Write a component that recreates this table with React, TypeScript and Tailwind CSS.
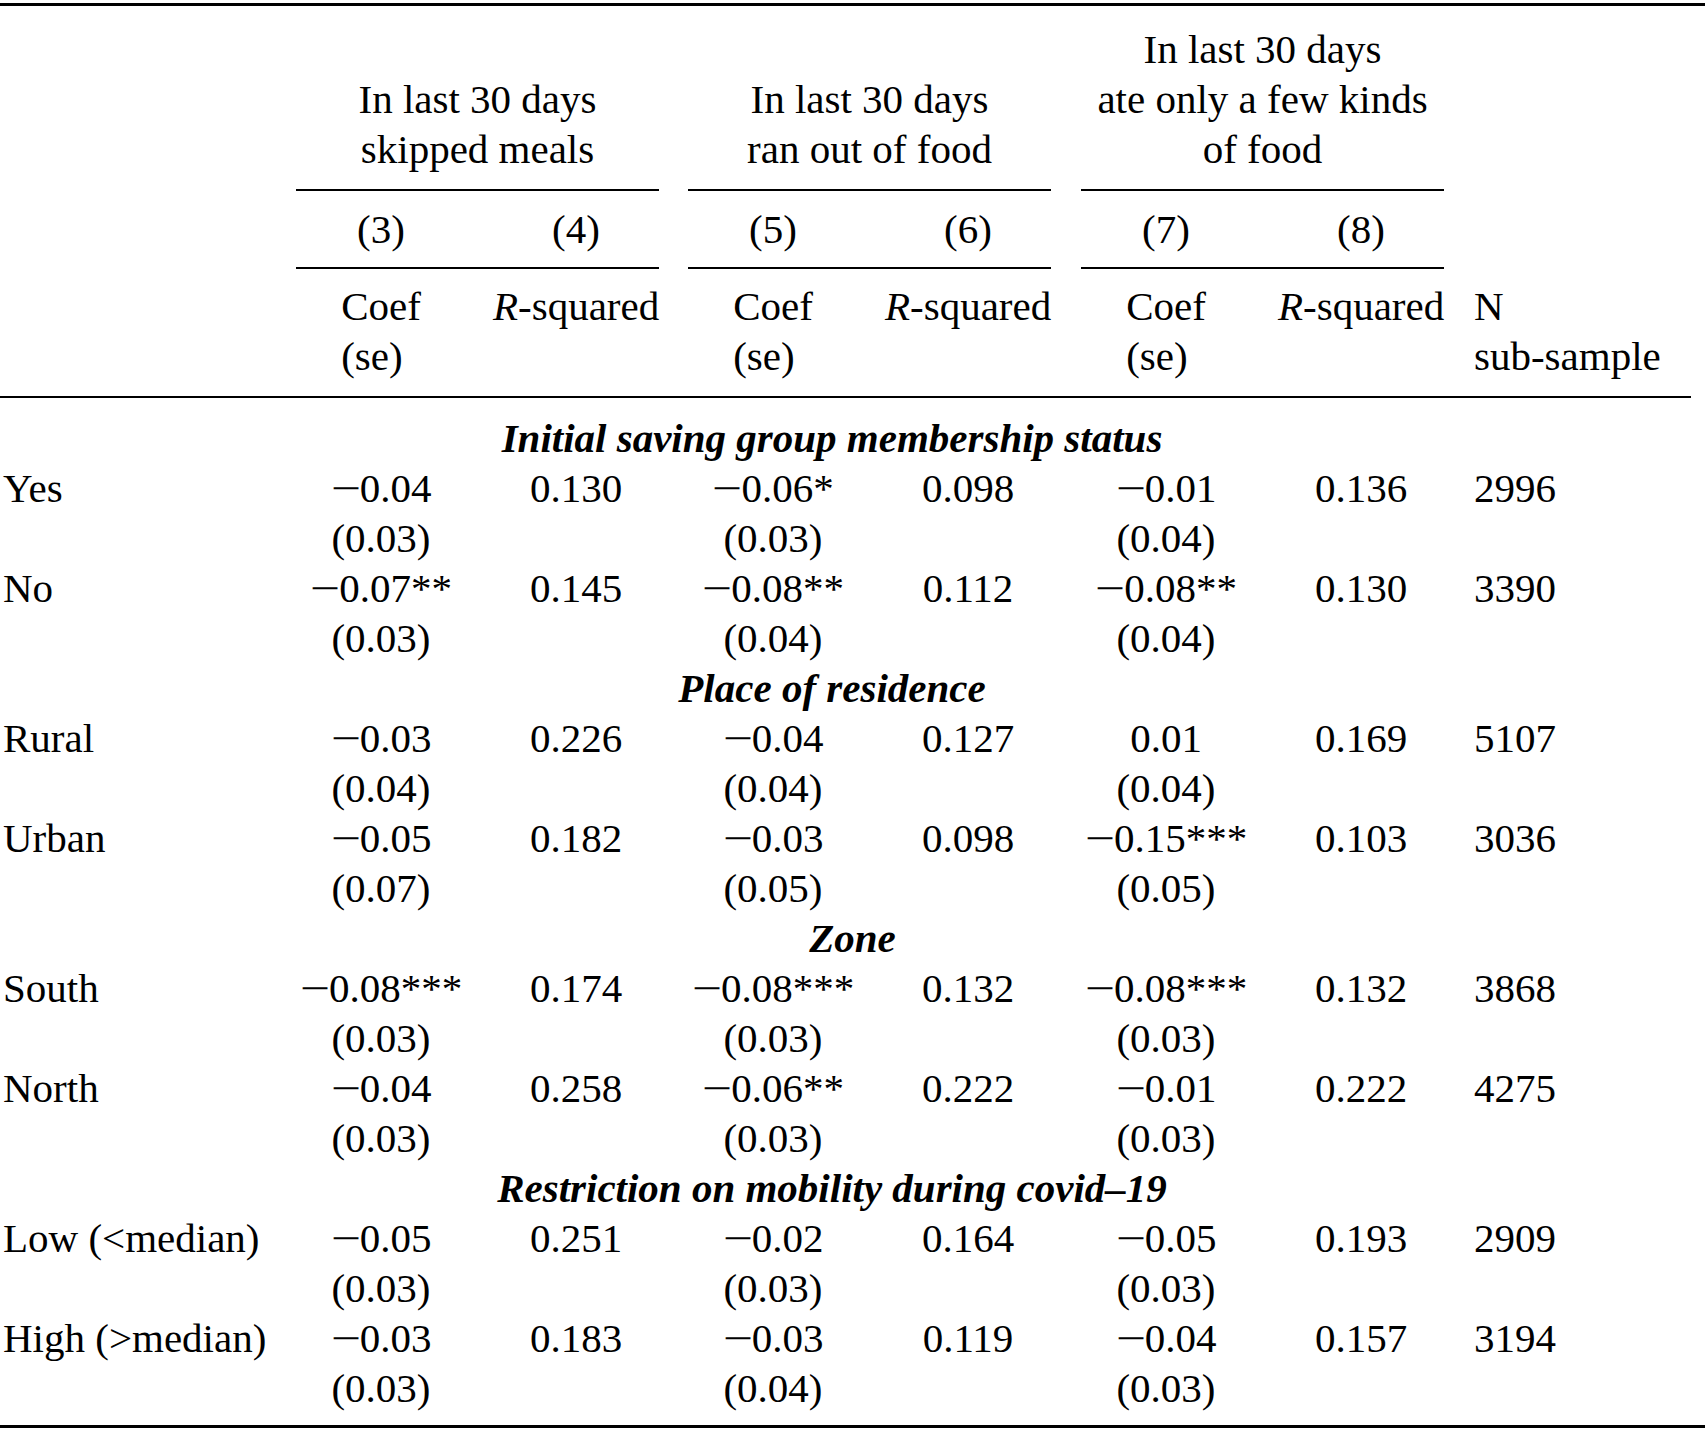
import React from "react";

type DataRow = {
  label: string;
  c3: string; se3: string; r4: string;
  c5: string; se5: string; r6: string;
  c7: string; se7: string; r8: string;
  n: string;
};

type Section = { title: string; shift: boolean; rows: DataRow[] };

const sections: Section[] = [
  {
    title: "Initial saving group membership status",
    shift: true,
    rows: [
      { label: "Yes", c3: "−0.04", se3: "(0.03)", r4: "0.130", c5: "−0.06*", se5: "(0.03)", r6: "0.098", c7: "−0.01", se7: "(0.04)", r8: "0.136", n: "2996" },
      { label: "No", c3: "−0.07**", se3: "(0.03)", r4: "0.145", c5: "−0.08**", se5: "(0.04)", r6: "0.112", c7: "−0.08**", se7: "(0.04)", r8: "0.130", n: "3390" },
    ],
  },
  {
    title: "Place of residence",
    shift: true,
    rows: [
      { label: "Rural", c3: "−0.03", se3: "(0.04)", r4: "0.226", c5: "−0.04", se5: "(0.04)", r6: "0.127", c7: "0.01", se7: "(0.04)", r8: "0.169", n: "5107" },
      { label: "Urban", c3: "−0.05", se3: "(0.07)", r4: "0.182", c5: "−0.03", se5: "(0.05)", r6: "0.098", c7: "−0.15***", se7: "(0.05)", r8: "0.103", n: "3036" },
    ],
  },
  {
    title: "Zone",
    shift: false,
    rows: [
      { label: "South", c3: "−0.08***", se3: "(0.03)", r4: "0.174", c5: "−0.08***", se5: "(0.03)", r6: "0.132", c7: "−0.08***", se7: "(0.03)", r8: "0.132", n: "3868" },
      { label: "North", c3: "−0.04", se3: "(0.03)", r4: "0.258", c5: "−0.06**", se5: "(0.03)", r6: "0.222", c7: "−0.01", se7: "(0.03)", r8: "0.222", n: "4275" },
    ],
  },
  {
    title: "Restriction on mobility during covid–19",
    shift: true,
    rows: [
      { label: "Low (<median)", c3: "−0.05", se3: "(0.03)", r4: "0.251", c5: "−0.02", se5: "(0.03)", r6: "0.164", c7: "−0.05", se7: "(0.03)", r8: "0.193", n: "2909" },
      { label: "High (>median)", c3: "−0.03", se3: "(0.03)", r4: "0.183", c5: "−0.03", se5: "(0.04)", r6: "0.119", c7: "−0.04", se7: "(0.03)", r8: "0.157", n: "3194" },
    ],
  },
];

function Num({ v }: { v: string }) {
  if (v.startsWith("−")) {
    return (
      <span className="whitespace-nowrap">
        <span className="inline-block w-[29px] origin-left scale-x-[1.3]">−</span>
        {v.slice(1)}
      </span>
    );
  }
  return <span>{v}</span>;
}

function CoefCell({ c, se, cls }: { c: string; se: string; cls: string }) {
  return (
    <div className={cls + " flex flex-col items-center whitespace-nowrap"}>
      <div><Num v={c} /></div>
      <div>{se}</div>
    </div>
  );
}

function Row({ r }: { r: DataRow }) {
  return (
    <div className="flex">
      <div className="w-[296px] pl-[3px] whitespace-nowrap">{r.label}</div>
      <CoefCell c={r.c3} se={r.se3} cls="w-[170px]" />
      <div className="ml-[27px] w-[166px] text-center">{r.r4}</div>
      <CoefCell c={r.c5} se={r.se5} cls="ml-[29px] w-[170px]" />
      <div className="ml-[27px] w-[166px] text-center">{r.r6}</div>
      <CoefCell c={r.c7} se={r.se7} cls="ml-[30px] w-[170px]" />
      <div className="ml-[27px] w-[166px] text-center">{r.r8}</div>
      <div className="ml-[30px] flex-1">{r.n}</div>
    </div>
  );
}

function CoefHead({ cls }: { cls: string }) {
  return (
    <div className={cls + " flex justify-center"}>
      <div className="text-left">
        <div>Coef</div>
        <div>(se)</div>
      </div>
    </div>
  );
}

function RHead({ cls }: { cls: string }) {
  return (
    <div className={cls + " text-center whitespace-nowrap"}>
      <i>R</i>-squared
    </div>
  );
}

export default function App() {
  return (
    <div className="w-[1705px] bg-white text-black font-['Liberation_Serif','Times_New_Roman',serif] text-[41px] leading-[50px]">
      <div className="pt-[3px]">
        <div className="h-[3px] bg-black" />
      </div>

      {/* group headers */}
      <div className="flex items-end pt-[18px]">
        <div className="w-[296px]" />
        <div className="w-[363px] text-center">
          <div>In last 30 days</div>
          <div>skipped meals</div>
        </div>
        <div className="ml-[29px] w-[363px] text-center">
          <div>In last 30 days</div>
          <div>ran out of food</div>
        </div>
        <div className="ml-[30px] w-[363px] text-center">
          <div>In last 30 days</div>
          <div>ate only a few kinds</div>
          <div>of food</div>
        </div>
      </div>

      <div className="flex pt-[15px]">
        <div className="w-[296px]" />
        <div className="w-[363px] h-[2px] bg-black" />
        <div className="ml-[29px] w-[363px] h-[2px] bg-black" />
        <div className="ml-[30px] w-[363px] h-[2px] bg-black" />
      </div>

      {/* column numbers */}
      <div className="flex pt-[13px]">
        <div className="w-[296px]" />
        <div className="w-[170px] text-center">(3)</div>
        <div className="ml-[27px] w-[166px] text-center">(4)</div>
        <div className="ml-[29px] w-[170px] text-center">(5)</div>
        <div className="ml-[27px] w-[166px] text-center">(6)</div>
        <div className="ml-[30px] w-[170px] text-center">(7)</div>
        <div className="ml-[27px] w-[166px] text-center">(8)</div>
      </div>

      <div className="flex pt-[13px]">
        <div className="w-[296px]" />
        <div className="w-[363px] h-[2px] bg-black" />
        <div className="ml-[29px] w-[363px] h-[2px] bg-black" />
        <div className="ml-[30px] w-[363px] h-[2px] bg-black" />
      </div>

      {/* coef / r-squared headers */}
      <div className="flex pt-[12px]">
        <div className="w-[296px]" />
        <CoefHead cls="w-[170px]" />
        <RHead cls="ml-[27px] w-[166px]" />
        <CoefHead cls="ml-[29px] w-[170px]" />
        <RHead cls="ml-[27px] w-[166px]" />
        <CoefHead cls="ml-[30px] w-[170px]" />
        <RHead cls="ml-[27px] w-[166px]" />
        <div className="ml-[30px] flex-1">
          <div>N</div>
          <div>sub-sample</div>
        </div>
      </div>

      <div className="pt-[15px] pr-[14px]">
        <div className="h-[2px] bg-black" />
      </div>

      <div className="pt-[15px]">
        {sections.map((s) => (
          <div key={s.title}>
            <div className={"text-center font-bold italic whitespace-nowrap " + (s.shift ? "pr-[41px]" : "")}>
              {s.title}
            </div>
            {s.rows.map((r) => (
              <Row key={r.label} r={r} />
            ))}
          </div>
        ))}
      </div>

      <div className="pt-[12px]">
        <div className="h-[3px] bg-black" />
      </div>
    </div>
  );
}
